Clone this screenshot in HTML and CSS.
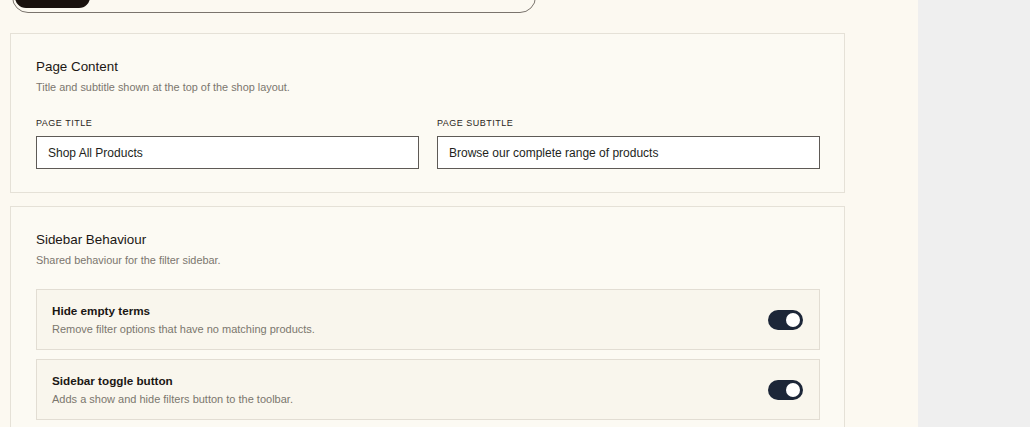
FILE: index.html
```html
<!DOCTYPE html>
<html lang="en">
<head>
<meta charset="utf-8">
<title>Shop Layout Settings</title>
<link rel="stylesheet" href="styles.css">
</head>
<body>
<div class="app">
  <main class="main">
    <nav class="tabs" aria-label="Settings sections">
      <button class="tab tab-active" aria-label="General"></button>
    </nav>

    <section class="card">
      <h2 class="card-title">Page Content</h2>
      <p class="card-desc">Title and subtitle shown at the top of the shop layout.</p>
      <div class="fields">
        <label class="field">
          <span class="field-label">Page Title</span>
          <input class="input" type="text" value="Shop All Products">
        </label>
        <label class="field">
          <span class="field-label">Page Subtitle</span>
          <input class="input" type="text" value="Browse our complete range of products">
        </label>
      </div>
    </section>

    <section class="card">
      <h2 class="card-title">Sidebar Behaviour</h2>
      <p class="card-desc">Shared behaviour for the filter sidebar.</p>
      <div class="rows">
        <div class="row">
          <div class="row-text">
            <div class="row-title">Hide empty terms</div>
            <div class="row-desc">Remove filter options that have no matching products.</div>
          </div>
          <span class="toggle on"><span class="knob"></span></span>
        </div>
        <div class="row">
          <div class="row-text">
            <div class="row-title">Sidebar toggle button</div>
            <div class="row-desc">Adds a show and hide filters button to the toolbar.</div>
          </div>
          <span class="toggle on"><span class="knob"></span></span>
        </div>
      </div>
    </section>
  </main>
  <aside class="side"></aside>
</div>
</body>
</html>
```

FILE: styles.css
```css
* { box-sizing: border-box; }

html, body {
  margin: 0;
  padding: 0;
  height: 100%;
  overflow: hidden;
}

body {
  font-family: "Liberation Sans", Arial, sans-serif;
  color: #1b1714;
  background: #fcf9f1;
}

.app {
  display: flex;
  min-height: 100%;
}

.main {
  width: 918px;
  flex: none;
  padding: 0 10px;
  background: #fcf9f1;
}

.side {
  flex: 1;
  background: #efefef;
}

.tabs {
  display: flex;
  width: 524px;
  height: 40px;
  margin: -27px 0 20px 2px;
  padding: 4px 2px;
  border: 1px solid #7a746d;
  border-radius: 16px;
}

.tab {
  border: 0;
  padding: 0;
  background: transparent;
}

.tab-active {
  width: 75px;
  height: 100%;
  background: #1a120e;
  border-radius: 11px;
}

.card {
  width: 835px;
  border: 1px solid #e5e1d7;
  background: #fcfaf3;
  padding: 25px 24px 23px 25px;
  margin-bottom: 13px;
}

.card-title {
  margin: 0;
  font-size: 13.4px;
  line-height: 16px;
  font-weight: 500;
  color: #1b1714;
}

.card-desc {
  margin: 5px 0 0;
  font-size: 10.9px;
  line-height: 14px;
  color: #7b766e;
}

.fields {
  display: grid;
  grid-template-columns: 383px 383px;
  column-gap: 18px;
  margin-top: 23px;
}

.field {
  display: flex;
  flex-direction: column;
  gap: 7px;
}

.field-label {
  font-size: 9px;
  line-height: 12px;
  letter-spacing: 0.5px;
  text-transform: uppercase;
  font-weight: 500;
  color: #2a2622;
}

.input {
  height: 33px;
  border: 1px solid #5e5a56;
  background: #ffffff;
  padding: 0 11px;
  font-family: "Liberation Sans", Arial, sans-serif;
  font-size: 12px;
  color: #231f1c;
  outline: none;
}

.rows {
  display: flex;
  flex-direction: column;
  gap: 9px;
  margin-top: 22px;
}

.row {
  width: 784px;
  height: 61px;
  display: flex;
  align-items: center;
  justify-content: space-between;
  padding: 0 16px 0 15px;
  border: 1px solid #e2ddd3;
  background: #f9f6ed;
}

.row-text {
  display: flex;
  flex-direction: column;
  gap: 4px;
}

.row-title {
  font-size: 11.7px;
  line-height: 14px;
  font-weight: 700;
  color: #1b1714;
}

.row-desc {
  font-size: 11px;
  line-height: 14px;
  color: #7b766e;
}

.toggle {
  position: relative;
  width: 35px;
  height: 20px;
  border-radius: 10px;
  background: #1c2638;
  flex: none;
}

.knob {
  position: absolute;
  top: 3px;
  right: 3px;
  width: 14px;
  height: 14px;
  border-radius: 50%;
  background: #ffffff;
}
```
